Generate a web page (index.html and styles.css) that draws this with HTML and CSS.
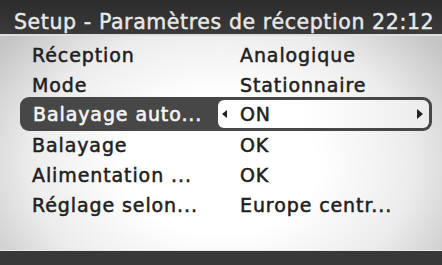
FILE: index.html
```html
<!DOCTYPE html>
<html lang="fr">
<head>
<meta charset="utf-8">
<title>Setup - Paramètres de réception</title>
<link rel="stylesheet" href="styles.css">
</head>
<body>
<div class="screen">
  <div class="header">Setup - Paramètres de réception 22:12</div>
  <div class="content">
    <div class="row"><span class="label">Réception</span><span class="value">Analogique</span></div>
    <div class="row"><span class="label">Mode</span><span class="value">Stationnaire</span></div>
    <div class="row selected">
      <span class="label">Balayage auto...</span>
      <span class="value box">
        <svg class="arrow" width="5" height="8" viewBox="0 0 5 8"><polygon points="5,0 5,8 0,4" fill="#222"/></svg>
        <span class="val-text">ON</span>
        <svg class="arrow right" width="6" height="10" viewBox="0 0 6 10"><polygon points="0,0 6,5 0,10" fill="#222"/></svg>
      </span>
    </div>
    <div class="row"><span class="label">Balayage</span><span class="value">OK</span></div>
    <div class="row"><span class="label">Alimentation ...</span><span class="value">OK</span></div>
    <div class="row"><span class="label">Réglage selon...</span><span class="value">Europe centr...</span></div>
  </div>
  <div class="footer"></div>
</div>
</body>
</html>
```
FILE: styles.css
```css
html, body {
  margin: 0;
  padding: 0;
}
body {
  width: 442px;
  height: 265px;
  overflow: hidden;
  font-family: "DejaVu Sans", "Liberation Sans", sans-serif;
}
.screen {
  width: 442px;
  height: 265px;
  display: flex;
  flex-direction: column;
  background: radial-gradient(ellipse 62% 75% at 50% 62%, #ffffff 35%, #ececec 70%, #c4c4c4 100%);
}
.header {
  height: 36px;
  box-sizing: border-box;
  padding: 10px 0 0 14px;
  line-height: 24px;
  font-size: 20.5px;
  letter-spacing: 0.6px;
  color: #e8e8e8;
  -webkit-text-stroke: 0.45px #e8e8e8;
  background: linear-gradient(#2c2c2c, #3a3a3a);
  border-bottom: 2px solid #dedede;
  white-space: nowrap;
}
.content {
  flex: 1;
  padding: 4px 10px 0 20px;
  display: flex;
  flex-direction: column;
}
.row {
  display: grid;
  grid-template-columns: 198px 1fr;
  height: 30px;
  line-height: 30px;
  font-size: 19px;
  letter-spacing: 0.9px;
  color: #202020;
  -webkit-text-stroke: 0.5px #202020;
  white-space: nowrap;
}
.label {
  padding-left: 12px;
}
.value {
  padding-left: 22px;
}
.row.selected {
  height: 34px;
  margin: -3px 0 -1px;
  background: #474747;
  border-radius: 9px;
  align-items: stretch;
}
.row.selected .label {
  color: #f4f4f4;
  -webkit-text-stroke: 0.6px #f4f4f4;
  line-height: 34px;
  padding-left: 13px;
}
.value.box {
  margin: 3px 3px 3px 0;
  padding: 0 6px 0 4px;
  background: linear-gradient(90deg, #ffffff 40%, #ececec 100%);
  border-radius: 6px;
  display: flex;
  align-items: center;
  line-height: 28px;
}
.val-text {
  margin-left: 13px;
  flex: 1;
}
.footer {
  height: 14px;
  background: #383838;
  border-top: 1px solid #e8e8e8;
}
```
